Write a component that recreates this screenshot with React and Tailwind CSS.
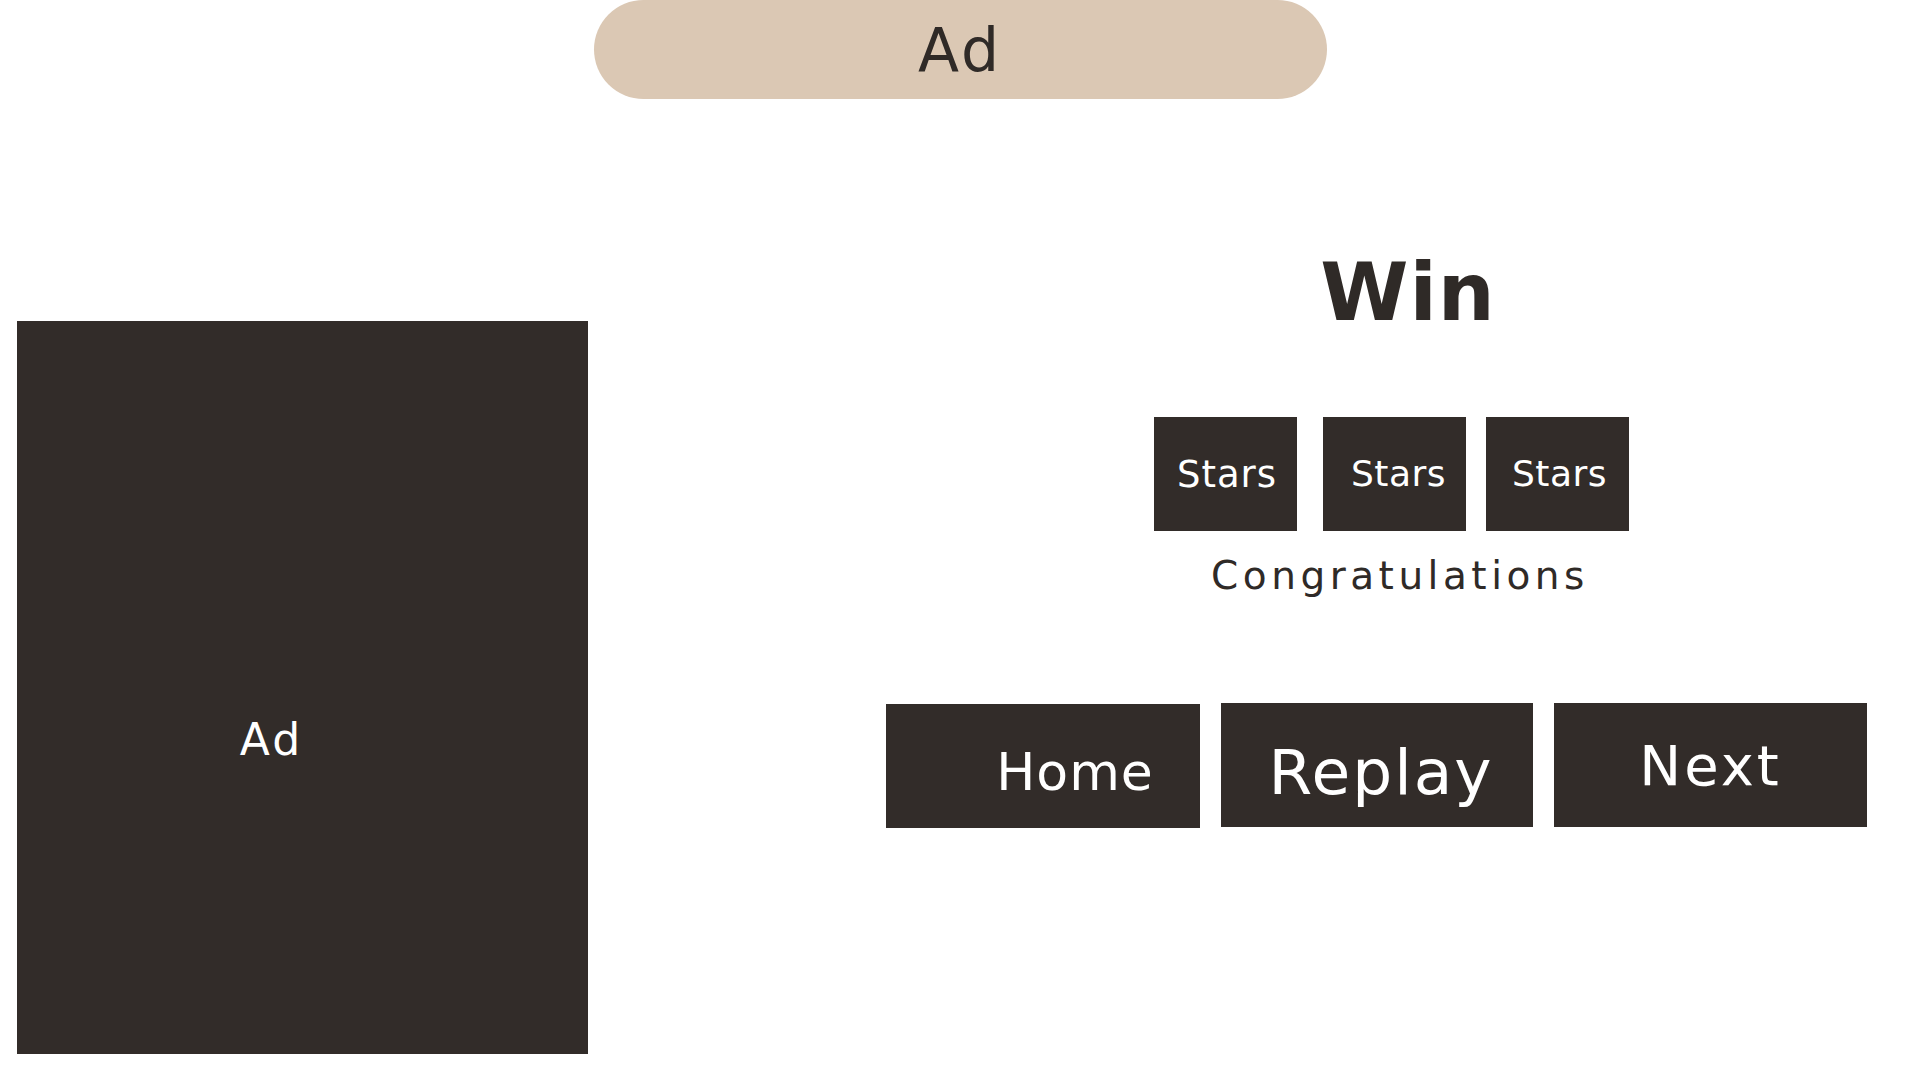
const font = { fontFamily: '"DejaVu Sans", "Liberation Sans", sans-serif' };

const StarBox = ({ className, textClass }) => (
  <div className={`flex h-[114px] w-[143px] items-center justify-center bg-[#322c29] ${className}`}>
    <span className={`leading-none text-white ${textClass}`}>Stars</span>
  </div>
);

export default function App() {
  return (
    <div className="h-[1080px] w-full overflow-hidden bg-white text-[#2f2a27]" style={font}>
      {/* Top ad banner */}
      <div className="mx-auto flex h-[99px] w-[733px] items-center justify-center rounded-full bg-[#dbc8b4]">
        <span className="text-[60px] leading-none tracking-[3px]">Ad</span>
      </div>

      <div className="flex items-start">
        {/* Side ad */}
        <div className="ml-[17px] mt-[222px] flex h-[733px] w-[571px] items-center justify-center bg-[#322c29] pr-[62px] pt-[104px]">
          <span className="text-[44px] leading-none tracking-[3px] text-white">Ad</span>
        </div>

        {/* Result panel */}
        <div className="flex flex-1 flex-col">
          <div className="ml-[670px] mt-[154px] w-[300px] text-center text-[80px] font-bold leading-none tracking-[1px]">
            Win
          </div>

          <div className="ml-[566px] mt-[84px] flex">
            <StarBox textClass="text-[37px] pl-[3px] tracking-[1px]" />
            <StarBox className="ml-[26px]" textClass="text-[36px] pl-[8px] tracking-[0.5px]" />
            <StarBox className="ml-[20px]" textClass="text-[36px] pl-[4px] tracking-[0.5px]" />
          </div>

          <div className="ml-[562px] mt-[25px] w-[500px] text-center text-[39px] leading-none tracking-[4.5px]">
            Congratulations
          </div>

          <div className="ml-[298px] mt-[108px] flex items-start">
            <div className="mt-[1px] flex h-[124px] w-[314px] items-center justify-center bg-[#322c29] pl-[64px] pt-[12px]">
              <span className="text-[52px] leading-none tracking-[1px] text-white">Home</span>
            </div>
            <div className="ml-[21px] flex h-[124px] w-[312px] items-center justify-center bg-[#322c29] pl-[8px] pt-[14px]">
              <span className="text-[63px] leading-none tracking-[2px] text-white">Replay</span>
            </div>
            <div className="ml-[21px] flex h-[124px] w-[313px] items-center justify-center bg-[#322c29] pt-[2px]">
              <span className="text-[56px] leading-none tracking-[3px] text-white">Next</span>
            </div>
          </div>
        </div>
      </div>
    </div>
  );
}
